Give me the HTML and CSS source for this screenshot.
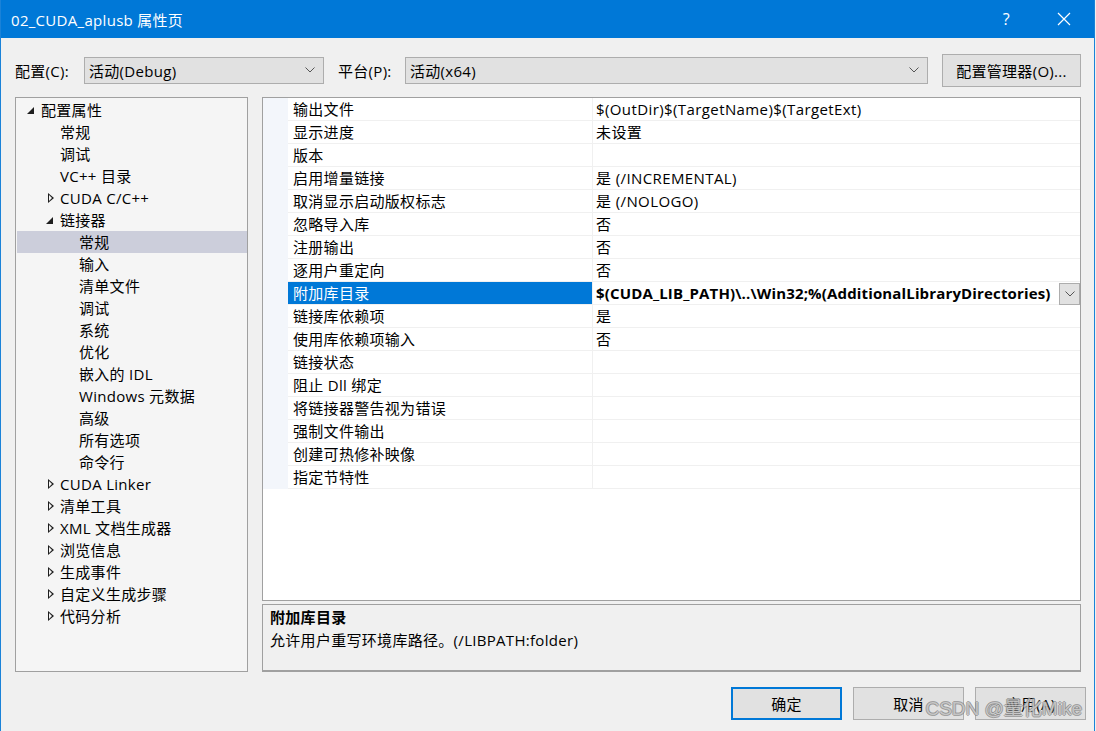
FILE: index.html
```html
<!DOCTYPE html>
<html lang="zh-CN">
  <head>
    <meta charset="UTF-8" />
    <title>02_CUDA_aplusb 属性页</title>
    <link rel="stylesheet" href="styles.css">
  </head>
  <body>
    <div class="window">
      <div class="titlebar">
        <span class="title">02_CUDA_aplusb 属性页</span>
        <span class="help">?</span>
        <svg class="close" width="14" height="14" viewBox="0 0 14 14">
          <path d="M1 1 L13 13 M13 1 L1 13" stroke="#fff" stroke-width="1.2" fill="none" />
        </svg>
      </div>

      <div class="toolbar">
        <span class="label">配置(C):</span>
        <div class="combo combo-config">
          <span>活动(Debug)</span>
          <svg class="chev" width="10" height="6" viewBox="0 0 10 6"><path d="M0.5 0.5 L5 5 L9.5 0.5" stroke="#555" fill="none" /></svg>
        </div>
        <span class="label label-platform">平台(P):</span>
        <div class="combo combo-platform">
          <span>活动(x64)</span>
          <svg class="chev" width="10" height="6" viewBox="0 0 10 6"><path d="M0.5 0.5 L5 5 L9.5 0.5" stroke="#555" fill="none" /></svg>
        </div>
        <button class="btn btn-manager">配置管理器(O)...</button>
      </div>

      <div class="main">
        <div class="tree">
          <div class="node lv0"><span class="arrow open"></span>配置属性</div>
          <div class="node lv1"><span class="arrow"></span>常规</div>
          <div class="node lv1"><span class="arrow"></span>调试</div>
          <div class="node lv1"><span class="arrow"></span>VC++ 目录</div>
          <div class="node lv1"><span class="arrow closed"></span>CUDA C/C++</div>
          <div class="node lv1"><span class="arrow open"></span>链接器</div>
          <div class="node lv2 selected"><span class="arrow"></span>常规</div>
          <div class="node lv2"><span class="arrow"></span>输入</div>
          <div class="node lv2"><span class="arrow"></span>清单文件</div>
          <div class="node lv2"><span class="arrow"></span>调试</div>
          <div class="node lv2"><span class="arrow"></span>系统</div>
          <div class="node lv2"><span class="arrow"></span>优化</div>
          <div class="node lv2"><span class="arrow"></span>嵌入的 IDL</div>
          <div class="node lv2"><span class="arrow"></span>Windows 元数据</div>
          <div class="node lv2"><span class="arrow"></span>高级</div>
          <div class="node lv2"><span class="arrow"></span>所有选项</div>
          <div class="node lv2"><span class="arrow"></span>命令行</div>
          <div class="node lv1"><span class="arrow closed"></span>CUDA Linker</div>
          <div class="node lv1"><span class="arrow closed"></span>清单工具</div>
          <div class="node lv1"><span class="arrow closed"></span>XML 文档生成器</div>
          <div class="node lv1"><span class="arrow closed"></span>浏览信息</div>
          <div class="node lv1"><span class="arrow closed"></span>生成事件</div>
          <div class="node lv1"><span class="arrow closed"></span>自定义生成步骤</div>
          <div class="node lv1"><span class="arrow closed"></span>代码分析</div>
        </div>

        <div class="right">
          <div class="grid">
            <div class="row"><div class="gutter"></div><div class="name">输出文件</div><div class="value">$(OutDir)$(TargetName)$(TargetExt)</div></div>
            <div class="row"><div class="gutter"></div><div class="name">显示进度</div><div class="value">未设置</div></div>
            <div class="row"><div class="gutter"></div><div class="name">版本</div><div class="value"></div></div>
            <div class="row"><div class="gutter"></div><div class="name">启用增量链接</div><div class="value">是 (/INCREMENTAL)</div></div>
            <div class="row"><div class="gutter"></div><div class="name">取消显示启动版权标志</div><div class="value">是 (/NOLOGO)</div></div>
            <div class="row"><div class="gutter"></div><div class="name">忽略导入库</div><div class="value">否</div></div>
            <div class="row"><div class="gutter"></div><div class="name">注册输出</div><div class="value">否</div></div>
            <div class="row"><div class="gutter"></div><div class="name">逐用户重定向</div><div class="value">否</div></div>
            <div class="row active">
              <div class="gutter"></div>
              <div class="name">附加库目录</div>
              <div class="value bold">
                <span>$(CUDA_LIB_PATH)\..\Win32;%(AdditionalLibraryDirectories)</span>
                <span class="drop">
                  <svg width="10" height="6" viewBox="0 0 10 6"><path d="M0.5 0.5 L5 5 L9.5 0.5" stroke="#555" fill="none" /></svg>
                </span>
              </div>
            </div>
            <div class="row"><div class="gutter"></div><div class="name">链接库依赖项</div><div class="value">是</div></div>
            <div class="row"><div class="gutter"></div><div class="name">使用库依赖项输入</div><div class="value">否</div></div>
            <div class="row"><div class="gutter"></div><div class="name">链接状态</div><div class="value"></div></div>
            <div class="row"><div class="gutter"></div><div class="name">阻止 Dll 绑定</div><div class="value"></div></div>
            <div class="row"><div class="gutter"></div><div class="name">将链接器警告视为错误</div><div class="value"></div></div>
            <div class="row"><div class="gutter"></div><div class="name">强制文件输出</div><div class="value"></div></div>
            <div class="row"><div class="gutter"></div><div class="name">创建可热修补映像</div><div class="value"></div></div>
            <div class="row"><div class="gutter"></div><div class="name">指定节特性</div><div class="value"></div></div>
          </div>

          <div class="desc">
            <div class="desc-title">附加库目录</div>
            <div class="desc-text">允许用户重写环境库路径。(/LIBPATH:folder)</div>
          </div>
        </div>
      </div>

      <div class="actions">
        <button class="btn btn-ok">确定</button>
        <button class="btn">取消</button>
        <button class="btn">应用(A)</button>
        <span class="watermark">CSDN @量化Mike</span>
      </div>
    </div>
  </body>
</html>
```

FILE: styles.css
```css
* {
  margin: 0;
  padding: 0;
  box-sizing: border-box;
}
body {
  background: #f0f0f0;
  font-family: "Open Sans", "Noto Sans CJK SC", sans-serif;
  font-size: 15px;
  letter-spacing: 0.3px;
  color: #000;
}
.window {
  width: 1095px;
  height: 731px;
  border-left: 1px solid #1a82d8;
  border-right: 1px solid #1a82d8;
  background: #f0f0f0;
  position: relative;
}

/* title bar */
.titlebar {
  height: 38px;
  background: #0078d7;
  color: #fff;
  display: flex;
  align-items: center;
  padding-left: 10px;
}
.title {
  font-size: 15px;
  flex: 1;
}
.help {
  font-size: 16px;
  margin-right: 47px;
}
.close {
  margin-right: 23px;
}

/* configuration row */
.toolbar {
  display: flex;
  align-items: center;
  height: 32px;
  margin-top: 16px;
  padding-left: 14px;
}
.label {
  width: 69px;
}
.label-platform {
  margin-left: 14px;
  width: 67px;
}
.combo {
  height: 27px;
  background: #e1e1e1;
  border: 1px solid #adadad;
  display: flex;
  align-items: center;
  justify-content: space-between;
  padding: 0 8px 0 4px;
}
.combo-config {
  width: 240px;
}
.combo-platform {
  width: 523px;
}
.btn {
  font: inherit;
  letter-spacing: inherit;
  background: #e1e1e1;
  border: 1px solid #adadad;
  color: #000;
}
.btn-manager {
  width: 139px;
  height: 33px;
  margin-left: 14px;
}

/* main panels */
.main {
  display: flex;
  margin-top: 11px;
  padding-left: 14px;
}
.tree {
  width: 233px;
  height: 575px;
  background: #f5f5f5;
  border: 1px solid #a0a0a0;
  padding: 1px 0 0 1px;
  margin-right: 14px;
}
.node {
  height: 22px;
  line-height: 22px;
  display: flex;
  align-items: center;
  white-space: nowrap;
}
.node.selected {
  background: #cccedb;
}
.lv0 { padding-left: 8px; }
.lv1 { padding-left: 27px; }
.lv2 { padding-left: 46px; }
.arrow {
  width: 16px;
  height: 22px;
  position: relative;
  flex: none;
}
.arrow.open::before {
  content: "";
  position: absolute;
  left: 2px;
  top: 8px;
  border-style: solid;
  border-width: 0 0 7px 7px;
  border-color: transparent transparent #1e1e1e transparent;
}
.arrow.closed::before {
  content: "";
  position: absolute;
  left: 4px;
  top: 6px;
  width: 0;
  height: 0;
  border-style: solid;
  border-width: 5px 0 5px 6px;
  border-color: transparent transparent transparent #1e1e1e;
}
.arrow.closed::after {
  content: "";
  position: absolute;
  left: 5px;
  top: 8px;
  border-style: solid;
  border-width: 3px 0 3px 3.6px;
  border-color: transparent transparent transparent #f5f5f5;
}

.right {
  width: 819px;
  display: flex;
  flex-direction: column;
}
.grid {
  height: 504px;
  background: #fff;
  border: 1px solid #a0a0a0;
}
.row {
  display: flex;
  height: 23px;
}
.gutter {
  width: 25px;
  background: #f3f6fb;
  flex: none;
}
.name {
  width: 305px;
  padding-left: 5px;
  line-height: 22px;
  border-bottom: 1px solid #f0f0f0;
  border-right: 1px solid #f0f0f0;
  white-space: nowrap;
}
.value {
  flex: 1;
  padding-left: 3px;
  line-height: 22px;
  border-bottom: 1px solid #f0f0f0;
  white-space: nowrap;
  display: flex;
  letter-spacing: 0.4px;
}
.active .name {
  background: #0078d7;
  color: #fff;
}
.value.bold {
  font-weight: bold;
  letter-spacing: 0.15px;
}
.drop {
  margin-left: auto;
  width: 21px;
  height: 22px;
  background: #e1e1e1;
  border: 1px solid #adadad;
  display: flex;
  align-items: center;
  justify-content: center;
  margin-top: 1px;
}

.desc {
  height: 68px;
  margin-top: 3px;
  border: 1px solid #a0a0a0;
  border-bottom-width: 2px;
  padding: 1px 7px;
  line-height: 23px;
}
.desc-title {
  font-weight: bold;
}

/* bottom buttons */
.actions {
  display: flex;
  justify-content: flex-end;
  gap: 11px;
  margin-top: 15px;
  padding-right: 8px;
  position: relative;
}
.actions .btn {
  width: 111px;
  height: 33px;
}
.btn-ok {
  border: 2px solid #0078d7;
}
/* watermark stamped over the dialog */
.watermark {
  position: absolute;
  right: 12px;
  top: 6px;
  font-family: "Liberation Sans", "Noto Sans CJK SC", sans-serif;
  font-size: 19px;
  letter-spacing: 0;
  color: rgba(255, 255, 255, 0.55);
  text-shadow: 1px 0 0 rgba(120, 120, 120, 0.6), -1px 0 0 rgba(120, 120, 120, 0.6), 0 1px 0 rgba(120, 120, 120, 0.6), 0 -1px 0 rgba(120, 120, 120, 0.6);
  pointer-events: none;
}
```
